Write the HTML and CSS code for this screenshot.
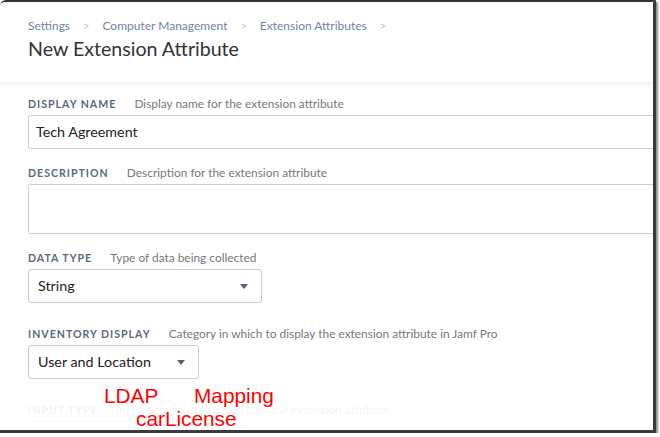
FILE: index.html
```html
<!DOCTYPE html>
<html>
<head>
    <title>New Extension Attribute</title>
    <meta name="viewport" content="width=device-width, initial-scale=1.0">
    <link rel="stylesheet" href="styles.css">
</head>
<body>
    <div class="window">
        <!-- Page header -->
        <div class="page-header">
            <div class="breadcrumb">
                <span>Settings</span>
                <span class="chevron">&gt;</span>
                <span>Computer Management</span>
                <span class="chevron">&gt;</span>
                <span>Extension Attributes</span>
                <span class="chevron">&gt;</span>
            </div>
            <h1>New Extension Attribute</h1>
        </div>

        <div class="form">
            <!-- Display name -->
            <div class="field">
                <div class="label-row">
                    <span class="label">Display Name</span>
                    <span class="hint">Display name for the extension attribute</span>
                </div>
                <div class="text-input">Tech Agreement</div>
            </div>

            <!-- Description -->
            <div class="field">
                <div class="label-row">
                    <span class="label">Description</span>
                    <span class="hint">Description for the extension attribute</span>
                </div>
                <div class="text-area"></div>
            </div>

            <!-- Data type -->
            <div class="field field-select">
                <div class="label-row">
                    <span class="label">Data Type</span>
                    <span class="hint">Type of data being collected</span>
                </div>
                <div class="select select-wide">
                    <span>String</span>
                    <span class="caret"></span>
                </div>
            </div>

            <!-- Inventory display -->
            <div class="field field-select">
                <div class="label-row">
                    <span class="label">Inventory Display</span>
                    <span class="hint">Category in which to display the extension attribute in Jamf Pro</span>
                </div>
                <div class="select select-narrow">
                    <span>User and Location</span>
                    <span class="caret"></span>
                </div>
            </div>

            <!-- Input type (faded out) -->
            <div class="field faded">
                <div class="label-row">
                    <span class="label">Input Type</span>
                    <span class="hint">Input type to use to populate the extension attribute</span>
                </div>
                <div class="select select-narrow"></div>
            </div>
        </div>

        <!-- Red annotation -->
        <div class="note note-ldap">LDAP</div>
        <div class="note note-mapping">Mapping</div>
        <div class="note note-attr">carLicense</div>
    </div>
</body>
</html>
```

FILE: styles.css
```css
body {
    margin: 0;
    padding: 0;
    background-color: #fff;
    font-family: Lato, "Open Sans", sans-serif;
    color: #333;
}

.window {
    position: relative;
    width: 653px;
    height: 428px;
    overflow: hidden;
    background-color: #fff;
    border-top: 2px solid #333;
    border-right: 3px solid #3a3a3a;
    border-bottom: 3px solid #3a3a3a;
    border-top-left-radius: 6px;
    box-shadow: 2px 2px 2px rgba(0, 0, 0, 0.45);
}

.page-header {
    height: 80px;
    padding: 16px 28px 0;
    box-sizing: border-box;
    background-color: #fff;
    box-shadow: 0 2px 5px rgba(0, 0, 0, 0.08);
    position: relative;
    z-index: 1;
}

.breadcrumb {
    font-size: 12px;
    line-height: 16px;
    color: #7083a6;
    display: flex;
    gap: 13px;
}

.chevron {
    color: #bcc3cf;
    font-size: 11px;
}

h1 {
    margin: 3px 0 0;
    font-size: 19.6px;
    font-weight: normal;
    line-height: 24px;
    color: #333;
}

.form {
    padding: 13px 0 0 28px;
}

.field {
    margin-bottom: 15px;
}

.field-select {
    margin-bottom: 22px;
}

.label-row {
    height: 14px;
    line-height: 14px;
    margin-bottom: 6px;
    white-space: nowrap;
}

.label {
    font-size: 10.6px;
    font-weight: bold;
    text-transform: uppercase;
    letter-spacing: 1px;
    color: #5a6882;
    margin-right: 14px;
}

.hint {
    font-size: 11.9px;
    color: #777;
}

.text-input,
.text-area,
.select {
    box-sizing: border-box;
    border: 1px solid #c9ccd6;
    border-radius: 3px;
    background-color: #fff;
    font-size: 14.3px;
    color: #222;
}

.text-input {
    width: 700px;
    height: 34px;
    line-height: 32px;
    padding-left: 7px;
}

.text-area {
    width: 700px;
    height: 50px;
}

.select {
    height: 34px;
    line-height: 32px;
    padding: 0 13px 0 9px;
    display: flex;
    justify-content: space-between;
    align-items: center;
}

.select-wide {
    width: 234px;
}

.select-narrow {
    width: 171px;
}

.caret {
    width: 0;
    height: 0;
    border-left: 4px solid transparent;
    border-right: 4px solid transparent;
    border-top: 5px solid #55607a;
}

.faded {
    opacity: 0.08;
}

.note {
    position: absolute;
    font-family: "Liberation Sans", Arial, sans-serif;
    font-size: 20.8px;
    line-height: 24px;
    color: #f00;
}

.note-ldap {
    left: 104px;
    top: 382px;
}

.note-mapping {
    left: 194px;
    top: 382px;
}

.note-attr {
    left: 136px;
    top: 405px;
}
```
